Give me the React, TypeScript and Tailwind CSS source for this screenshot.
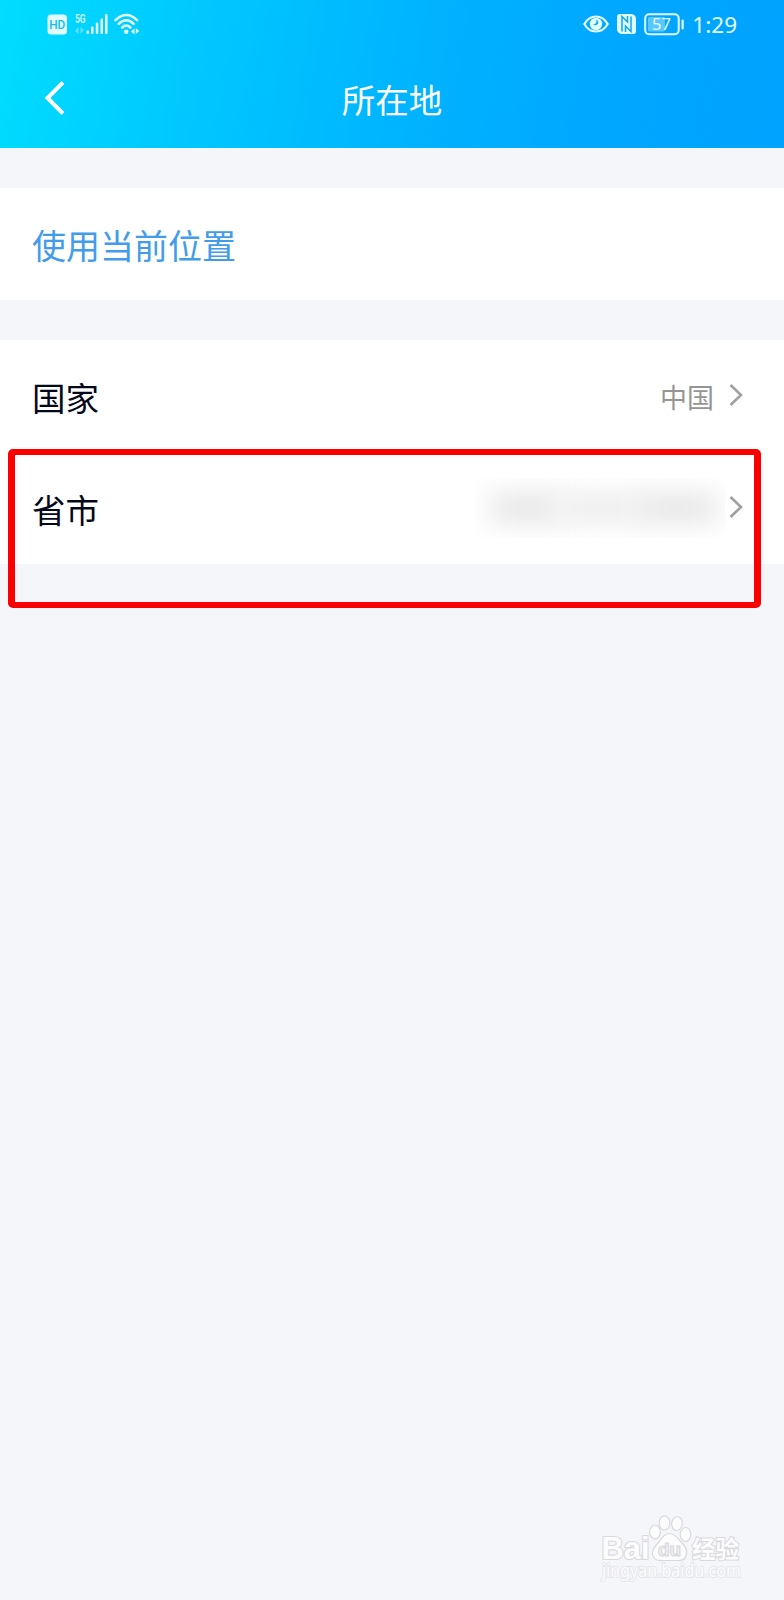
import type { ReactNode } from "react";

const rows = [
  { label: "国家", value: "中国" },
  { label: "省市", value: null },
];

export default function App() {
  return (
    <div className="relative flex h-[1600px] w-[784px] flex-col overflow-hidden bg-[#f4f6fa] font-['Noto_Sans_CJK_SC',sans-serif]">
      <header className="h-[148px] bg-[linear-gradient(100deg,#00ddff_0%,#00c6ff_27%,#00b2ff_55%,#00a6ff_80%,#00a3ff_100%)] text-white">
        <StatusBar />
        <NavBar title="所在地" />
      </header>

      <main className="flex flex-col gap-10 pt-10">
        <button type="button" className="flex h-28 items-center bg-white px-8 pt-0.5 text-left text-[34px] leading-none text-[#429ceb]">
          使用当前位置
        </button>

        <section className="bg-white">
          {rows.map((row) => (
            <Row key={row.label} label={row.label}>
              {row.value ? <span className="pr-[15px] text-[27px] leading-none text-[#959595]">{row.value}</span> : <HiddenValue />}
            </Row>
          ))}
        </section>
      </main>

      {/* highlight around the province row */}
      <div className="absolute left-2 top-[449px] h-[159px] w-[753px] rounded-[5px] border-x-7 border-y-6 border-[#fb0000]" />

      <div className="absolute bottom-4 right-[38px]">
        <Watermark />
      </div>
    </div>
  );
}

function StatusBar() {
  return (
    <div className="flex h-12 items-center justify-between pl-[47px] pr-[47px] text-[#e2fbff]">
      <div className="flex items-center">
        <HdIcon />
        <SignalIcon />
        <WifiIcon />
      </div>
      <div className="flex items-center">
        <EyeIcon />
        <NfcIcon />
        <BatteryIcon />
        <span className="ml-[7px] pt-0.5 font-['Noto_Sans',sans-serif] text-[22.5px] leading-none">1:29</span>
      </div>
    </div>
  );
}

function NavBar({ title }: { title: string }) {
  return (
    <div className="grid h-[100px] grid-cols-[1fr_auto_1fr] items-center px-11">
      <button type="button" aria-label="返回" className="w-5">
        <svg width="20" height="34" viewBox="0 0 20 34" fill="none" stroke="currentColor" strokeWidth="4">
          <path d="M19 1.5 3.5 17 19 32.5" />
        </svg>
      </button>
      <h1 className="pt-px text-[33.5px] font-normal leading-none">{title}</h1>
    </div>
  );
}

function Row({ label, children }: { label: string; children: ReactNode }) {
  return (
    <div className="flex h-28 items-center justify-between pl-8 pr-[41px]">
      <span className="pt-px text-[33.5px] leading-none text-[#03081a]">{label}</span>
      <span className="flex items-center">
        {children}
        <svg className="mb-0.5" width="14" height="24" viewBox="0 0 14 24" fill="none" stroke="#a0a0a0" strokeWidth="2.6">
          <path d="M1.5 2 12 12 1.5 22" />
        </svg>
      </span>
    </div>
  );
}

function HiddenValue() {
  return (
    <span className="mr-1 flex h-[60px] w-[250px] items-center overflow-hidden pl-4">
      <span className="h-7 w-[68px] shrink-0 bg-[#e4e4e4] blur-[14px]" />
      <span className="h-7 w-[76px] shrink-0 bg-[#ebebeb] blur-[14px]" />
      <span className="h-7 w-[82px] shrink-0 bg-[#e4e4e4] blur-[14px]" />
    </span>
  );
}

function HdIcon() {
  return (
    <svg width="21" height="21" viewBox="0 0 21 21">
      <rect x="0.5" y="0.5" width="19.5" height="20" rx="3.5" fill="currentColor" />
      <text x="10.2" y="15" textAnchor="middle" textLength="16" lengthAdjust="spacingAndGlyphs" fontSize="13" fontWeight="500" fontFamily="Roboto, sans-serif" fill="#12bdf0">
        HD
      </text>
    </svg>
  );
}

function SignalIcon() {
  return (
    <svg className="ml-[6px] overflow-visible" width="34" height="22" viewBox="0 0 34 22" fill="currentColor">
      <text x="1" y="9.8" textLength="10.5" lengthAdjust="spacingAndGlyphs" fontSize="12.5" fontWeight="500" fontFamily="Roboto, sans-serif">
        5G
      </text>
      <path d="M4.5 14v7L1 18zM6.5 21v-7l3.500 3z" opacity="0.4" />
      <rect x="12.5" y="17.5" width="2.5" height="3.5" rx="1" />
      <rect x="17" y="13.5" width="2.5" height="7.5" rx="1" />
      <rect x="21.8" y="9.5" width="2.5" height="11.5" rx="1" />
      <rect x="26.5" y="5.5" width="2.5" height="15.5" rx="1" />
      <rect x="31" y="1" width="2.5" height="20" rx="1" />
    </svg>
  );
}

function WifiIcon() {
  return (
    <svg className="ml-[6px]" width="26" height="22" viewBox="0 0 26 22" fill="none" stroke="currentColor" strokeWidth="2.6" strokeLinecap="round">
      <path d="M1.5 7.2C8 .2 16.5.2 23 7.2M4.8 10.9c4.6-4.800 10.3-4.8 14.9 0M8.2 14.5c2.6-2.7 5.5-2.7 8.100 0" />
      <circle cx="12.2" cy="18.8" r="2.2" fill="currentColor" stroke="none" />
      <path d="M20.5 15.5v6L17 18.500zM21.800 21v-6l3.5 3z" fill="currentColor" stroke="none" />
    </svg>
  );
}

function EyeIcon() {
  return (
    <svg width="26" height="20" viewBox="0 0 26 20" fill="none">
      <path d="M1.3 10C7 0 19 0 24.7 10 19 20 7 20 1.3 10Z" stroke="currentColor" strokeWidth="2.2" />
      <circle cx="13" cy="10" r="6.2" fill="currentColor" />
      {/* crescent cut into the iris */}
      <path d="M13.2 5.5a3 3 0 1 1-3.300 4.700c2.300.4 4.300-1.700 3.300-4.700Z" fill="#08aefa" />
    </svg>
  );
}

function NfcIcon() {
  return (
    <svg className="ml-[7px]" width="21" height="22" viewBox="0 0 21 22">
      <path d="M3.5 1H14Q20 1 20 6V18Q20 21 17.5 21H7Q1 21 1 16V4Q1 1 3.5 1Z" fill="currentColor" />
      <path d="M6 18.500V3.500L11.500 9V3M15 3.500v15L9.500 13v6" fill="none" stroke="#08a8f5" strokeWidth="1.500" />
    </svg>
  );
}

function BatteryIcon() {
  return (
    <svg className="ml-[7px] overflow-visible" width="41" height="23" viewBox="0 0 41 23">
      <rect x="1.2" y="1.2" width="33.5" height="20" rx="4" fill="none" stroke="currentColor" strokeWidth="2" />
      <rect x="4" y="4" width="17" height="14.5" rx="1.5" fill="currentColor" opacity="0.4" />
      <rect x="37.5" y="6.500" width="2.2" height="10" rx="1" fill="currentColor" />
      <text x="17.5" y="17.2" textAnchor="middle" fontSize="16.5" fontFamily="'Noto Sans', sans-serif" fill="currentColor">
        57
      </text>
    </svg>
  );
}

function Watermark() {
  return (
    <svg className="overflow-visible" width="146" height="72" viewBox="0 0 146 72" fill="#fcfcfd" stroke="#d8d9dc" strokeWidth="1.2" fontFamily="'Liberation Sans', sans-serif">
      <text x="1.5" y="46.5" fontSize="31" fontWeight="700" textLength="48" lengthAdjust="spacingAndGlyphs" strokeWidth="2.2" paintOrder="stroke">
        Bai
      </text>
      <ellipse cx="55" cy="20" rx="5.3" ry="7" />
      <ellipse cx="64.5" cy="11" rx="5.3" ry="7.2" />
      <ellipse cx="77" cy="11.5" rx="5.3" ry="7" transform="rotate(8 77 11.5)" />
      <ellipse cx="85.5" cy="22.5" rx="5.3" ry="7" />
      <path d="M69.500 21.500c6 0 9 6 12.500 9.500 4 4 5.500 7 4.500 11.500-1 5-5 6.500-10 6H63c-6 .5-10-1-10.500-6.500-.4-4.500 2-7.500 5.500-11 3.500-3.500 5.500-9.500 11.500-9.500Z" />
      <text x="58" y="44" fontSize="18" fontWeight="700" textLength="23" lengthAdjust="spacingAndGlyphs" fill="#f4f6fa">
        du
      </text>
      <text x="92" y="46" fontSize="24" fontWeight="700" fontFamily="'Noto Sans CJK SC', sans-serif" textLength="47" lengthAdjust="spacingAndGlyphs" strokeWidth="2" paintOrder="stroke">
        经验
      </text>
      <text x="2" y="64.5" fontSize="17.5" fontFamily="'Noto Sans', sans-serif" textLength="139" lengthAdjust="spacingAndGlyphs" strokeWidth="2" stroke="#e5e6ea" paintOrder="stroke">
        jingyan.baidu.com
      </text>
    </svg>
  );
}
